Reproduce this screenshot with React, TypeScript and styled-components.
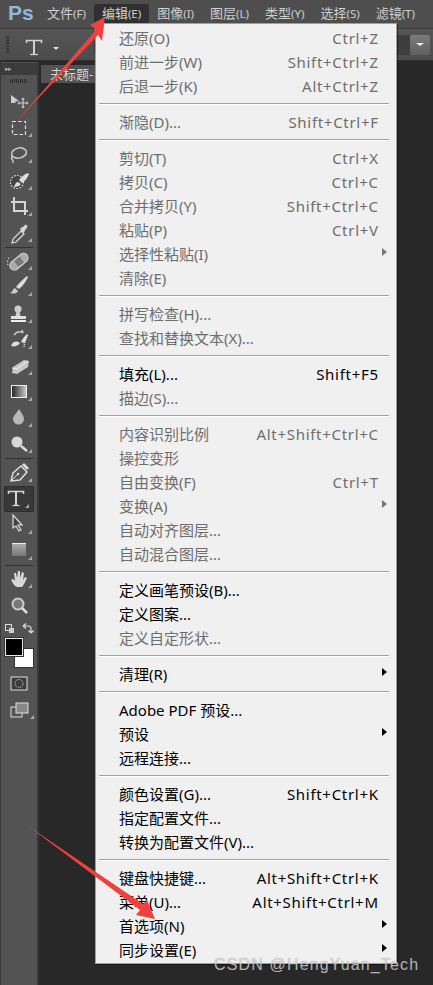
import React from "react";
import styled, { createGlobalStyle } from "styled-components";

const Global = createGlobalStyle`
  html, body { margin: 0; padding: 0; background: #282828; }
  #root { width: 433px; height: 985px; overflow: hidden; }
`;
const FONT = `"Noto Sans", "Noto Sans CJK SC", sans-serif`;

const Page = styled.div`
  position: relative; width: 433px; height: 985px; display: flex; flex-direction: column;
  overflow: hidden; background: #282828; font-family: ${FONT};
`;
const MenuBar = styled.div`
  height: 28px; flex: none; display: flex; align-items: flex-start; background: #4e4e4e; box-sizing: border-box; padding: 4px 0 0 8px;
`;
const Logo = styled.div`
  width: 20px; font: bold 21px/17px "Liberation Sans", sans-serif; color: #8fb8dc; margin-right: 11px;
`;
const TopItem = styled.div<{ $active?: boolean }>`
  height: 19px; line-height: 19px; font-size: 13px; color: #cfcfcf; padding: 0 8px; white-space: nowrap; border-radius: 2px;
  background: ${(p) => (p.$active ? "#303030" : "transparent")};
  span { font-size: 11.5px; }
`;
const OptionsBar = styled.div`
  height: 33px; flex: none; display: flex; align-items: center; box-sizing: border-box; padding-left: 6px;
  background: linear-gradient(#555, #4c4c4c); border-top: 1px solid #3a3a3a; border-bottom: 1px solid #303030;
`;
const Grip = styled.div`
  width: 3px; height: 18px; background: repeating-linear-gradient(#2e2e2e 0 1px, transparent 1px 2px);
`;
const OptionIcon = styled.svg`
  flex: none; display: block;
`;
const Divider = styled.div`
  width: 1px; height: 20px; background: #3a3a3a; margin: 0 10px 0 5px;
`;
const Spacer = styled.div`
  flex: 1;
`;
const DropField = styled.div`
  width: 20px; height: 20px; margin-right: 3px; border-radius: 2px; background: linear-gradient(#7a7a7a, #5f5f5f);
  display: flex; align-items: center; justify-content: center;
  &::after { content: ""; border: 4px solid transparent; border-top: 3px solid #eee; border-bottom: 0; }
`;
const FieldBack = styled.div`
  width: 13px; height: 20px; background: #3e3e3e;
`;
const Body = styled.div`
  flex: 1; display: flex; min-height: 0; padding-top: 1px;
`;
const ToolColumn = styled.div`
  width: 39px; flex: none; box-sizing: border-box; border-left: 1px solid #3a3a3a; border-right: 2px solid #383838; background: #535353;
  display: flex; flex-direction: column;
`;
const CollapseHead = styled.div`
  height: 12px; background: #3c3c3c; color: #aaa; font-size: 7px; line-height: 12px; padding-left: 4px; letter-spacing: -1px;
  margin-top: 1px;
`;
const ToolGrip = styled.div`
  height: 4px; margin: 4px 9px 6px 9px; background: repeating-linear-gradient(90deg, #2c2c2c 0 1px, transparent 1px 2px);
`;
const ToolRow = styled.div<{ $active?: boolean }>`
  height: 26.2px; flex: none; position: relative; display: flex; justify-content: center;
  ${(p) => p.$active && "background: #383838; margin: 0 3px; border-radius: 2px; box-shadow: inset 0 0 0 1px #2e2e2e;"}
  svg { flex: none; display: block; }
`;
const ToolSep = styled.div`
  height: 1px; margin: 0.5px 4px; background: #333; flex: none;
`;
const ColorArea = styled.div`
  height: 34px; flex: none; display: flex; box-sizing: border-box; padding: 3px 0 0 4px;
`;
const Swatch = styled.div<{ $fg?: boolean }>`
  width: ${(p) => (p.$fg ? "16px" : "18px")}; height: ${(p) => (p.$fg ? "16px" : "18px")}; border: 1px solid ${(p) => (p.$fg ? "#e8e8e8" : "#333")};
  background: ${(p) => (p.$fg ? "#000" : "#fff")}; flex: none;
  ${(p) => (p.$fg ? "position: relative; z-index: 1; box-shadow: 0 0 0 1px #333;" : "margin: 10px 0 0 -9px;")}
`;
const Canvas = styled.div`
  flex: 1; background: #282828; padding: 3px 0 0 2px; min-width: 0;
`;
const DocTab = styled.div`
  width: 110px; height: 18px; background: #535353; color: #d4d4d4; font-size: 13px; line-height: 18px; padding-left: 9px; box-sizing: border-box; white-space: nowrap;
`;
const Menu = styled.div`
  position: absolute; left: 95px; top: 23px; width: 302px; height: 941px; box-sizing: border-box;
  background: #f0f0f0; border: 1px solid #a0a0a0; padding: 2px 6px 2px 2px; box-shadow: 1px 1px 1px rgba(0,0,0,.4);
  display: flex; flex-direction: column;
`;
const Row = styled.div<{ $off?: boolean }>`
  height: 24px; flex: none; display: flex; align-items: center; position: relative; padding: 0 12px 0 21px; font-size: 15px; line-height: 24px;
  color: ${(p) => (p.$off ? "#6d6d6d" : "#000")}; white-space: nowrap;
`;
const Label = styled.span`
  flex: 1;
`;
const Shortcut = styled.span`
  flex: none; font-size: 15px; letter-spacing: 0.7px; margin-right: -0.7px;
`;
const Arrow = styled.i<{ $off?: boolean }>`
  position: absolute; right: 3px; top: 6px; border-style: solid; border-width: 4.5px 0 4.5px 5px;
  border-color: transparent transparent transparent ${(p) => (p.$off ? "#777" : "#000")};
`;
const Sep = styled.div`
  height: 12px; flex: none; display: flex; align-items: flex-start; padding-top: 5px; box-sizing: border-box; margin-right: -2px;
  &::after { content: ""; flex: 1; height: 1px; background: #a0a0a0; box-shadow: 0 1px 0 #fff; margin-left: 1px; margin-right: 3px; }
`;
const Overlay = styled.svg`
  position: absolute; left: 0; top: 0; pointer-events: none; z-index: 5;
`;
const Watermark = styled.div`
  position: absolute; left: 214px; top: 955px; font: 16px/20px "Liberation Sans", sans-serif; letter-spacing: 1.15px; color: rgba(232,232,232,.72);
  text-shadow: 0 0 1px rgba(60,60,60,.5); z-index: 6; white-space: nowrap;
`;

type M = { t?: string; k?: string; off?: boolean; sub?: boolean; sep?: boolean };
const items: M[] = [
  { t: "还原(O)", k: "Ctrl+Z", off: true },
  { t: "前进一步(W)", k: "Shift+Ctrl+Z", off: true },
  { t: "后退一步(K)", k: "Alt+Ctrl+Z", off: true },
  { sep: true },
  { t: "渐隐(D)...", k: "Shift+Ctrl+F", off: true },
  { sep: true },
  { t: "剪切(T)", k: "Ctrl+X", off: true },
  { t: "拷贝(C)", k: "Ctrl+C", off: true },
  { t: "合并拷贝(Y)", k: "Shift+Ctrl+C", off: true },
  { t: "粘贴(P)", k: "Ctrl+V", off: true },
  { t: "选择性粘贴(I)", off: true, sub: true },
  { t: "清除(E)", off: true },
  { sep: true },
  { t: "拼写检查(H)...", off: true },
  { t: "查找和替换文本(X)...", off: true },
  { sep: true },
  { t: "填充(L)...", k: "Shift+F5" },
  { t: "描边(S)...", off: true },
  { sep: true },
  { t: "内容识别比例", k: "Alt+Shift+Ctrl+C", off: true },
  { t: "操控变形", off: true },
  { t: "自由变换(F)", k: "Ctrl+T", off: true },
  { t: "变换(A)", off: true, sub: true },
  { t: "自动对齐图层...", off: true },
  { t: "自动混合图层...", off: true },
  { sep: true },
  { t: "定义画笔预设(B)..." },
  { t: "定义图案..." },
  { t: "定义自定形状...", off: true },
  { sep: true },
  { t: "清理(R)", sub: true },
  { sep: true },
  { t: "Adobe PDF 预设..." },
  { t: "预设", sub: true },
  { t: "远程连接..." },
  { sep: true },
  { t: "颜色设置(G)...", k: "Shift+Ctrl+K" },
  { t: "指定配置文件..." },
  { t: "转换为配置文件(V)..." },
  { sep: true },
  { t: "键盘快捷键...", k: "Alt+Shift+Ctrl+K" },
  { t: "菜单(U)...", k: "Alt+Shift+Ctrl+M" },
  { t: "首选项(N)", sub: true },
  { t: "同步设置(E)", sub: true },
];

const C = "#cdcdcd";
const Corner = () => <path d="M32 18v4h-4z" fill="#a8a8a8" />;
type T = { d?: React.ReactNode; corner?: boolean; sep?: boolean; active?: boolean };
const tools: T[] = [
  { d: <g><path d="M11 6l8 6-3.500 .5 0 1.500-4.500 0z" fill={C} /><path d="M23 10v8M19 14h8" stroke={C} strokeWidth="1.200" /><path d="M23 8.500l-2 2h4zM23 19.500l-2-2h4zM17.500 14l2-2v4zM28.500 14l-2-2v4z" fill={C} /></g> },
  { corner: true, d: <rect x="12.500" y="6.500" width="13" height="13" fill="none" stroke="#e0e0e0" strokeWidth="1.200" strokeDasharray="3.500 2.200" /> },
  { corner: true, d: <g fill="none" stroke={C} strokeWidth="1.500"><ellipse cx="19" cy="12" rx="7.500" ry="5" transform="rotate(-12 19 12)" /><path d="M12 15c-2 3 2 4 1 7" /></g> },
  { corner: true, d: <g><circle cx="17" cy="14" r="6.500" fill="#444" stroke="#ddd" strokeWidth="1.200" strokeDasharray="1.500 1.500" /><path d="M28 5c-3 1-7 4-9 7l3 3c3-2 6-6 7-9zM18 14c-2 0-3 2-4 5 3 0 6-1 7-3z" fill="#dedede" /></g> },
  { corner: true, d: <path d="M11 8h14v13M14 3v14h14" fill="none" stroke="#d5d5d5" strokeWidth="2" /> },
  { corner: true, d: <g><path d="M12 23l1-4 8-8 3 3-8 8z" fill="#555" stroke="#ddd" strokeWidth="1.200" /><path d="M20 9l2-2 1 0 2-2c2-1 3 1 2 3l-2 2v1l-2 2z" fill="#d5d5d5" /></g> },
  { sep: true },
  { corner: true, d: <g transform="rotate(-40 19 13)"><rect x="8" y="9" width="21" height="9" rx="4.500" fill="#aaa" stroke="#ddd" /><rect x="15" y="10" width="7" height="7" fill="#777" /><path d="M8 9a8 8 0 0 1 6-5" stroke="#ddd" fill="none" strokeDasharray="1.500 1.500" /></g> },
  { corner: true, d: <g><path d="M27 2c-4 3-8 7-11 11l3 2c4-3 7-8 9-12z" fill="#dcdcdc" /><path d="M15 14c-2 0-2 4-5 5 3 1 7 1 8-2z" fill="#c8c8c8" /></g> },
  { corner: true, d: <g fill={C}><circle cx="18" cy="8" r="3.500" /><path d="M16.500 10h3l1 5h-5z" /><path d="M11 15h15v3H11z" fill="#e0e0e0" /><path d="M11 19h15v2H11z" fill="#eee" /></g> },
  { corner: true, d: <g><path d="M12 17c2-3 5-3 8-1-2 3-6 4-9 3z" fill="#ddd" /><path d="M27 7c-2 2-4 4-6 8l3 1c2-2 3-5 4-8z" fill="#ddd" /><path d="M14 8c3-4 7-4 9-2l-1-3" fill="none" stroke="#ccc" strokeWidth="1.500" /><path d="M25 13l-1 7" stroke="#fff" strokeWidth="1.200" strokeDasharray="1 1" /></g> },
  { corner: true, d: <g><path d="M13 14l11-7 5 1-1 6-11 7-5-1z" fill="#c8c8c8" /><path d="M12 15l5 1 11-8" fill="none" stroke="#eee" strokeWidth="1" /></g> },
  { corner: true, d: <g><defs><linearGradient id="gr"><stop offset="0" stopColor="#222" /><stop offset="1" stopColor="#ccc" /></linearGradient></defs><rect x="11.500" y="6.500" width="15" height="12" fill="url(#gr)" stroke="#eee" /></g> },
  { corner: true, d: <path d="M19 4c3 5 5 7 5 10a5.500 5.500 0 0 1-11 0c0-3 3-5 6-10z" fill="#b8b8b8" /> },
  { corner: true, d: <g><circle cx="17" cy="11" r="5.500" fill="#d8d8d8" /><path d="M21 15l6 5" stroke="#ddd" strokeWidth="2.500" /></g> },
  { sep: true },
  { corner: true, d: <g><path d="M11 21l2-8 8-7 6 6-7 8z" fill="#555" stroke="#ddd" strokeWidth="1.500" /><path d="M11 21l6-6" stroke="#ddd" /><circle cx="18" cy="14" r="1.200" fill="#ddd" /><path d="M22 5l2-2 5 5-2 2z" fill="#ddd" /></g> },
  { active: true, corner: true, d: <g fill="none" stroke="#d8d8d8"><path d="M11.500 8V5.500h15V8" strokeWidth="1.500" /><path d="M19 5v14" strokeWidth="2" /><path d="M15.500 19.500h7" strokeWidth="1.200" /></g> },
  { corner: true, d: <g><path d="M13 3v13l3-2 3 5 2-1-3-5h4z" fill="#444" stroke="#ddd" strokeWidth="1.200" /></g> },
  { corner: true, d: <g><defs><linearGradient id="sh" x2="0" y2="1"><stop offset="0" stopColor="#aaa" /><stop offset="1" stopColor="#777" /></linearGradient></defs><rect x="12" y="6" width="14" height="12" fill="url(#sh)" /><path d="M12 5.500h14" stroke="#eee" /></g> },
  { sep: true },
  { corner: true, d: <path d="M17 21c-3-1-4-4-6-7l2-1 2 2-1-8 2 0 1 5 1-7h2l0 7 2-6 2 1-1 7 2-3 2 1c-2 4-3 7-5 9z" fill="#d8d8d8" /> },
  { d: <g><circle cx="18" cy="11" r="5.500" fill="#777" stroke="#ccc" strokeWidth="2" /><path d="M22 15l5 5" stroke="#ddd" strokeWidth="2.500" /></g> },
];

const OptionsT = () => (
  <OptionIcon width="80" height="26" viewBox="0 0 80 26">
    <g fill="none" stroke="#d4d4d4"><path d="M17.500 11V8.500h15V11" strokeWidth="1.500" /><path d="M25 8v14" strokeWidth="2" /><path d="M21 22.500h8" strokeWidth="1.200" /></g>
    <path d="M44 15h6l-3 3z" fill="#ddd" />
  </OptionIcon>
);

export default function App() {
  return (
    <Page>
      <Global />
      <MenuBar>
        <Logo>Ps</Logo>
        <TopItem>文件<span>(F)</span></TopItem>
        <TopItem $active>编辑<span>(E)</span></TopItem>
        <TopItem>图像<span>(I)</span></TopItem>
        <TopItem>图层<span>(L)</span></TopItem>
        <TopItem>类型<span>(Y)</span></TopItem>
        <TopItem>选择<span>(S)</span></TopItem>
        <TopItem>滤镜<span>(T)</span></TopItem>
      </MenuBar>
      <OptionsBar>
        <Grip />
        <OptionsT />
        <Divider />
        <Spacer />
        <FieldBack />
        <DropField />
      </OptionsBar>
      <Body>
        <ToolColumn>
          <CollapseHead>▸▸</CollapseHead>
          <ToolGrip />
          {tools.map((tool, i) =>
            tool.sep ? (
              <ToolSep key={i} />
            ) : (
              <ToolRow key={i} $active={tool.active}>
                <svg width="39" height="26" viewBox="0 0 39 26" style={tool.active ? { marginLeft: -6 } : undefined}>
                  {tool.d}
                  {tool.corner && <Corner />}
                </svg>
              </ToolRow>
            )
          )}
          <svg width="36" height="16" viewBox="0 0 36 16" style={{ flex: "none", display: "block" }}>
            <rect x="4.500" y="5.500" width="6" height="6" fill="none" stroke="#ddd" />
            <rect x="8" y="9" width="5" height="5" fill="#ccc" />
            <path d="M22 7h5c2 0 3 1 3 3v3M22 7l3-2.500M22 7l3 2.500M30 14l-2.500-2.500M30 14l2.500-2.500" fill="none" stroke="#ddd" strokeWidth="1.200" />
          </svg>
          <ColorArea>
            <Swatch $fg />
            <Swatch />
          </ColorArea>
          <svg width="36" height="46" viewBox="0 0 36 46" style={{ flex: "none", display: "block", marginTop: 6 }}>
            <rect x="10" y="2" width="16" height="13" fill="#3c3c3c" stroke="#ddd" />
            <circle cx="18" cy="8.500" r="4" fill="none" stroke="#ddd" strokeDasharray="1 1" />
            <rect x="10" y="32" width="11" height="10" fill="#555" stroke="#ddd" />
            <rect x="15" y="28" width="12" height="10" fill="#888" stroke="#ddd" />
            <path d="M33 40v4h-4z" fill="#a8a8a8" />
          </svg>
        </ToolColumn>
        <Canvas>
          <DocTab>未标题-1</DocTab>
        </Canvas>
      </Body>
      <Menu>
        {items.map((m, i) =>
          m.sep ? (
            <Sep key={i} />
          ) : (
            <Row key={i} $off={m.off}>
              <Label>{m.t}</Label>
              {m.k && <Shortcut>{m.k}</Shortcut>}
              {m.sub && <Arrow $off={m.off} />}
            </Row>
          )
        )}
      </Menu>
      <Overlay width="433" height="985" viewBox="0 0 433 985">
        <path d="M15 123L96 30L90 25L105 17L102 41L98 35Z" fill="#f0413f" />
        <path d="M28 826L143 904L147 900L155 919L136 915L140 910Z" fill="#f0413f" />
      </Overlay>
      <Watermark>CSDN @HengYuan_Tech</Watermark>
    </Page>
  );
}
